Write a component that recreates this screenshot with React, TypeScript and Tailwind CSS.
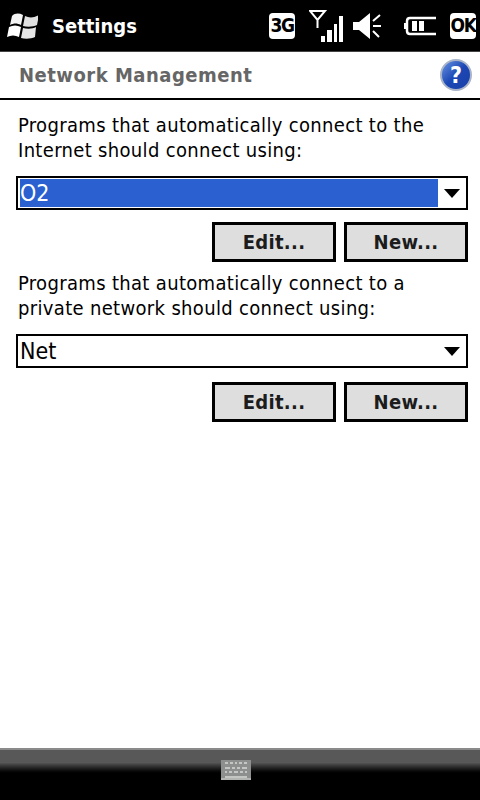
import React from "react";

const font = { fontFamily: '"DejaVu Sans Condensed", "DejaVu Sans", Tahoma, sans-serif' };

function StartFlag() {
  return (
    <svg width="32" height="28" viewBox="0 0 32 28" className="shrink-0">
      <path d="M6 4 C9 1 13 1 17 3 L15 13 C11 11 8 11 4 13 Z" fill="#f4f4f4" />
      <path d="M19 4 C23 6 28 6 33 3 L31 13 C27 15 21 15 17 14 Z" fill="#ffffff" opacity="0.88" />
      <path d="M3 15 C7 13 11 13 15 15 L13 25 C9 23 5 23 1 25 Z" fill="#ffffff" />
      <path d="M17 16 C21 17 27 17 30 15 L29 25 C25 27 19 27 15 26 Z" fill="#e6e6e6" />
    </svg>
  );
}

function SignalIcon() {
  return (
    <svg width="34" height="32" viewBox="0 0 34 32" className="shrink-0">
      <path d="M1 1 H16 L8.5 10 Z M8.5 10 V18" fill="none" stroke="#fff" strokeWidth="2" />
      <rect x="12" y="26" width="4" height="6" fill="#fff" />
      <rect x="18" y="20" width="5" height="12" fill="#fff" />
      <rect x="25" y="14" width="3" height="18" fill="#fff" />
      <rect x="30" y="6" width="4" height="26" fill="#fff" />
    </svg>
  );
}

function VolumeIcon() {
  return (
    <svg width="28" height="28" viewBox="0 0 28 28" className="shrink-0">
      <path d="M0 10 H6 L17 1 V27 L6 18 H0 Z" fill="#fff" />
      <path d="M20 9 L27 3 M20 14 H28 M20 19 L26 25" stroke="#fff" strokeWidth="2" fill="none" />
    </svg>
  );
}

function BatteryIcon() {
  return (
    <svg width="32" height="20" viewBox="0 0 32 20" className="shrink-0">
      <path d="M0 7 H3 V13 H0 Z" fill="#fff" />
      <path d="M32 2 H6 Q3 2 3 5 V15 Q3 18 6 18 H32" fill="none" stroke="#fff" strokeWidth="2.5" />
      <rect x="8" y="5" width="5" height="10" fill="#fff" />
      <rect x="15" y="5" width="5" height="10" fill="#fff" />
    </svg>
  );
}

function HelpIcon() {
  return (
    <div className="flex h-8 w-8 items-center justify-center rounded-full border-2 border-[#a9b4c8] bg-gradient-to-br from-[#6a92e2] via-[#1c47b4] to-[#1a3fa8] text-[23px] font-bold leading-none text-white">
      ?
    </div>
  );
}

function KeyboardIcon() {
  const rows = [
    [3, 3, 3, 3, 3],
    [5, 3, 3, 5],
    [3, 3, 5, 3, 3],
  ];
  return (
    <div className="mr-2 flex h-5 w-[30px] flex-col justify-between border-b-2 border-[#b3b5b3] bg-[#8c8f8d] px-1 pt-[2px]">
      {rows.map((row, i) => (
        <div key={i} className="flex justify-center gap-[2px]">
          {row.map((w, j) => (
            <span key={j} className="h-[2px] bg-[#c4c6c4]" style={{ width: w }} />
          ))}
        </div>
      ))}
      <div className="mx-auto h-[2px] w-[22px] bg-[#c4c6c4]" />
    </div>
  );
}

function Select({ value, selected }: { value: string; selected?: boolean }) {
  return (
    <div className="flex h-[34px] items-stretch border-2 border-black bg-white">
      <div
        className={
          selected
            ? "my-px ml-[2px] flex w-[418px] items-center bg-[#2a60d0] text-[23px] text-white"
            : "flex flex-1 items-center pl-[2px] text-[23px] text-black"
        }
      >
        {value}
      </div>
      <div className="ml-auto flex w-[28px] items-center justify-center">
        <div className="h-0 w-0 border-x-[8.5px] border-t-[9px] border-x-transparent border-t-black" />
      </div>
    </div>
  );
}

function Buttons() {
  return (
    <div className="mt-3 flex justify-end gap-2">
      {["Edit...", "New..."].map((label) => (
        <button
          key={label}
          className="flex h-10 w-[124px] items-center justify-center border-[3px] border-black bg-[#dedede] text-[20px] font-bold tracking-[0.3px] text-[#1c1c1c]"
        >
          {label}
        </button>
      ))}
    </div>
  );
}

export default function App() {
  return (
    <div className="flex h-[800px] w-[480px] flex-col bg-white" style={font}>
      {/* Title bar */}
      <div className="flex h-[52px] shrink-0 items-center border-b border-[#444] bg-black pl-[6px] pr-[4px]">
        <StartFlag />
        <span className="ml-[14px] text-[20px] font-bold text-white">Settings</span>
        <div className="ml-auto flex items-center">
          <div className="flex h-[26px] w-[26px] items-center justify-center rounded-[4px] bg-white text-[19px] font-bold tracking-[-1.5px] text-black">3G</div>
          <div className="ml-[14px]"><SignalIcon /></div>
          <div className="ml-[10px]"><VolumeIcon /></div>
          <div className="ml-[23px]"><BatteryIcon /></div>
          <div className="ml-[14px] flex h-[26px] w-[26px] items-center justify-center rounded-[4px] bg-white text-[19px] font-bold tracking-[-1.5px] text-black">OK</div>
        </div>
      </div>

      {/* Page heading */}
      <div className="flex h-12 shrink-0 items-center justify-between border-b-2 border-black pl-[19px] pr-2">
        <span className="text-[20px] font-bold tracking-[0.5px] text-[#666]">Network Management</span>
        <HelpIcon />
      </div>

      {/* Content */}
      <div className="flex-1 pl-4 pr-3 pt-[13px] text-[20px] leading-[25px] text-black">
        <p className="pl-[2px] tracking-[0.33px]">
          Programs that automatically connect to the
          <br />
          Internet should connect using:
        </p>
        <div className="mt-[13px]">
          <Select value="O2" selected />
        </div>
        <Buttons />
        <p className="mt-[9px] pl-[2px] tracking-[0.33px]">
          Programs that automatically connect to a
          <br />
          private network should connect using:
        </p>
        <div className="mt-[13px]">
          <Select value="Net" />
        </div>
        <div className="pt-[2px]">
          <Buttons />
        </div>
      </div>

      {/* Bottom bar */}
      <div className="flex h-[52px] shrink-0 justify-center border-t-2 border-[#8a8a8a] bg-gradient-to-b from-[#585858] from-25% to-black to-50% pt-[10px]">
        <KeyboardIcon />
      </div>
    </div>
  );
}
